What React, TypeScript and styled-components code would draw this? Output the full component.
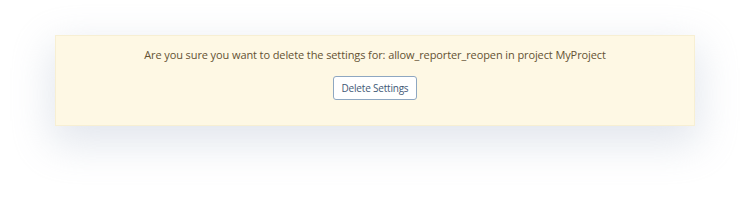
import React from 'react';
import styled, { createGlobalStyle } from 'styled-components';

const GlobalStyle = createGlobalStyle`
  html, body {
    margin: 0;
    padding: 0;
    background: #ffffff;
  }
  body {
    font-family: "Open Sans", "Liberation Sans", sans-serif;
  }
`;

const Page = styled.div`
  padding: 35px 55px 0 55px;
  height: 201px;
  box-sizing: border-box;
`;

const Warning = styled.div`
  width: 640px;
  height: 91px;
  box-sizing: border-box;
  background: #fef8e4;
  border: 1px solid #f7efd3;
  box-shadow: 0 14px 40px 4px rgba(190, 200, 215, 0.45);
  display: flex;
  flex-direction: column;
  align-items: center;
  padding-top: 11px;
`;

const Message = styled.p`
  margin: 0;
  font-size: 11px;
  line-height: 16px;
  letter-spacing: -0.1px;
  color: #645233;
`;

const Button = styled.button`
  margin-top: 13px;
  height: 24px;
  padding: 0 8px;
  font-family: "Open Sans", "Liberation Sans", sans-serif;
  font-size: 10px;
  letter-spacing: -0.2px;
  color: #3f5876;
  background: #ffffff;
  border: 1px solid #8ea7c1;
  border-radius: 3px;
  cursor: pointer;
`;

const App = () => (
  <>
    <GlobalStyle />
    <Page>
      <Warning>
        <Message>
          Are you sure you want to delete the settings for: allow_reporter_reopen in project MyProject
        </Message>
        <Button type="button">Delete Settings</Button>
      </Warning>
    </Page>
  </>
);

export default App;
